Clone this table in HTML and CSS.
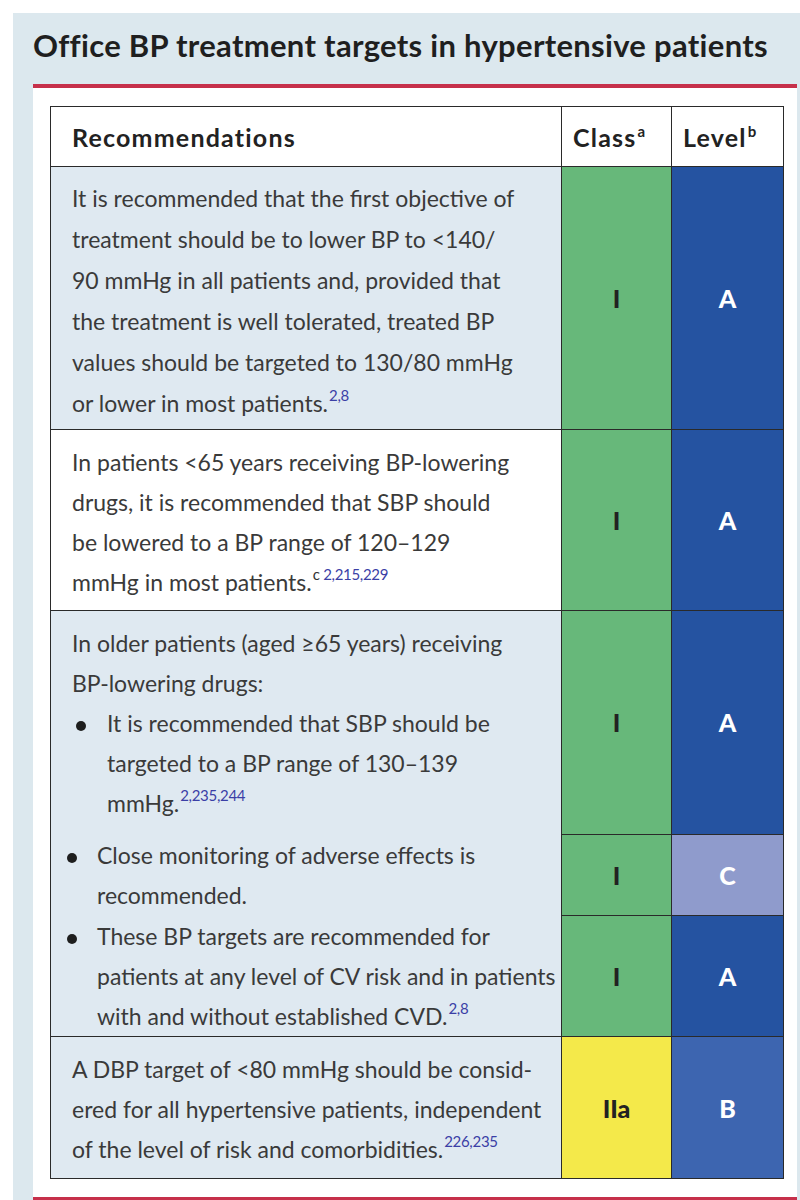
FILE: index.html
```html
<!DOCTYPE html>
<html lang="en">
<head>
<meta charset="utf-8">
<title>Office BP treatment targets in hypertensive patients</title>
<link rel="stylesheet" href="styles.css">
</head>
<body>
<div class="panel">
  <h1 class="title">Office BP treatment targets in hypertensive patients</h1>
  <div class="card">
    <table class="rec">
      <colgroup>
        <col class="col-rec">
        <col class="col-cls">
        <col class="col-lvl">
      </colgroup>
      <thead>
        <tr class="row-head">
          <th class="head head-rec">Recommendations</th>
          <th class="head head-cls">Class<sup class="hsup">a</sup></th>
          <th class="head head-lvl">Level<sup class="hsup">b</sup></th>
        </tr>
      </thead>
      <tbody>
        <tr class="row-1">
          <td class="txt tint wide">It is recommended that the first objective of<br>treatment should be to lower BP to &lt;140/<br>90 mmHg in all patients and, provided that<br>the treatment is well tolerated, treated BP<br>values should be targeted to 130/80 mmHg<br>or lower in most patients.<sup class="ref">2,8</sup></td>
          <td class="grade green">I</td>
          <td class="grade blue">A</td>
        </tr>
        <tr class="row-2">
          <td class="txt plain">In patients &lt;65 years receiving BP-lowering<br>drugs, it is recommended that SBP should<br>be lowered to a BP range of 120–129<br>mmHg in most patients.<sup class="ref"><span class="fn">c</span> 2,215,229</sup></td>
          <td class="grade green">I</td>
          <td class="grade blue">A</td>
        </tr>
        <tr class="row-3a">
          <td class="txt tint tall" rowspan="3">
            <div class="lead">In older patients (aged ≥65 years) receiving<br>BP-lowering drugs:</div>
            <ul class="bullets">
              <li class="item item-inner"><span>It is recommended that SBP should be<br>targeted to a BP range of 130–139<br>mmHg.<sup class="ref">2,235,244</sup></span></li>
              <li class="item item-outer item-gap"><span>Close monitoring of adverse effects is<br>recommended.</span></li>
              <li class="item item-outer item-gap2"><span>These BP targets are recommended for<br>patients at any level of CV risk and in patients<br>with and without established CVD.<sup class="ref">2,8</sup></span></li>
            </ul>
          </td>
          <td class="grade green">I</td>
          <td class="grade blue">A</td>
        </tr>
        <tr class="row-3b">
          <td class="grade green">I</td>
          <td class="grade lilac">C</td>
        </tr>
        <tr class="row-3c">
          <td class="grade green">I</td>
          <td class="grade blue">A</td>
        </tr>
        <tr class="row-4">
          <td class="txt tint">A DBP target of &lt;80 mmHg should be consid-<br>ered for all hypertensive patients, independent<br>of the level of risk and comorbidities.<sup class="ref">226,235</sup></td>
          <td class="grade yellow">IIa</td>
          <td class="grade blue-b">B</td>
        </tr>
      </tbody>
    </table>
  </div>
</div>
</body>
</html>
```
FILE: styles.css
```css
html, body {
  margin: 0;
  padding: 0;
  background: #ffffff;
}

body {
  font-family: Lato, "Open Sans", "Liberation Sans", sans-serif;
  color: #3a3a3a;
}

.panel {
  margin: 13px 0 0 13px;
  background: #dce8ee;
  padding: 0 3px 0 20px;
}

.title {
  margin: 0;
  padding: 15px 0 21px;
  font-size: 31px;
  line-height: 35px;
  font-weight: 700;
  color: #1f1f1f;
  letter-spacing: 0.3px;
  white-space: nowrap;
}

.card {
  background: #ffffff;
  border-top: 4px solid #c6304a;
  border-bottom: 4px solid #c6304a;
  padding: 18px 14px 18px 17px;
}

.rec {
  width: 733px;
  border-collapse: collapse;
  table-layout: fixed;
}

.col-rec { width: 511px; }
.col-cls { width: 110px; }
.col-lvl { width: 112px; }

.rec th,
.rec td {
  border: 1.5px solid #2a2a2a;
}

.row-head { height: 60px; }
.row-1 { height: 263px; }
.row-2 { height: 181px; }
.row-3a { height: 223px; }
.row-3b { height: 81px; }
.row-3c { height: 121px; }
.row-4 { height: 142px; }

.head {
  background: #ffffff;
  font-size: 25px;
  font-weight: 700;
  letter-spacing: 1.2px;
  color: #222222;
  text-align: left;
  vertical-align: middle;
  padding: 0 0 0 11px;
}

.head-rec { padding-left: 21px; }

.hsup {
  font-size: 15px;
  vertical-align: 10px;
  line-height: 0;
  margin-left: 1px;
  letter-spacing: 0;
}

.txt {
  vertical-align: top;
  padding: 12px 2px 0 21px;
  font-size: 23px;
  line-height: 40px;
  white-space: nowrap;
}

.txt.wide {
  line-height: 41px;
  padding-top: 11px;
}

.txt.tall {
  padding-top: 12px;
}

.tint { background: #dfe9f1; }
.plain { background: #ffffff; }

.ref {
  font-size: 15px;
  line-height: 0;
  vertical-align: 11px;
  color: #3b3fa6;
  letter-spacing: -0.3px;
  margin-left: 1px;
}

.fn { color: #333333; }

.lead { margin: 0; }

.bullets {
  list-style: none;
  margin: 0;
  padding: 0;
}

.item {
  display: flex;
  align-items: flex-start;
}

.item::before {
  content: "";
  flex: 0 0 10px;
  width: 10px;
  height: 10px;
  border-radius: 50%;
  background: #1e1e1e;
  margin-top: 18px;
}

.item-inner {
  margin-left: 4px;
}

.item-inner::before {
  margin-right: 21px;
}

.item-outer {
  margin-left: -5px;
}

.item-outer::before {
  margin-right: 20px;
}

.item-gap { margin-top: 12px; }
.item-gap2 { margin-top: 1px; }

.grade {
  text-align: center;
  vertical-align: middle;
  font-size: 25px;
  font-weight: 900;
  padding: 0;
}

.green { background: #67b87a; color: #222222; }
.blue { background: #2553a1; color: #ffffff; }
.lilac { background: #8f9bcc; color: #ffffff; }
.blue-b { background: #3d65b0; color: #ffffff; }
.yellow { background: #f4e94a; color: #222222; }
```
